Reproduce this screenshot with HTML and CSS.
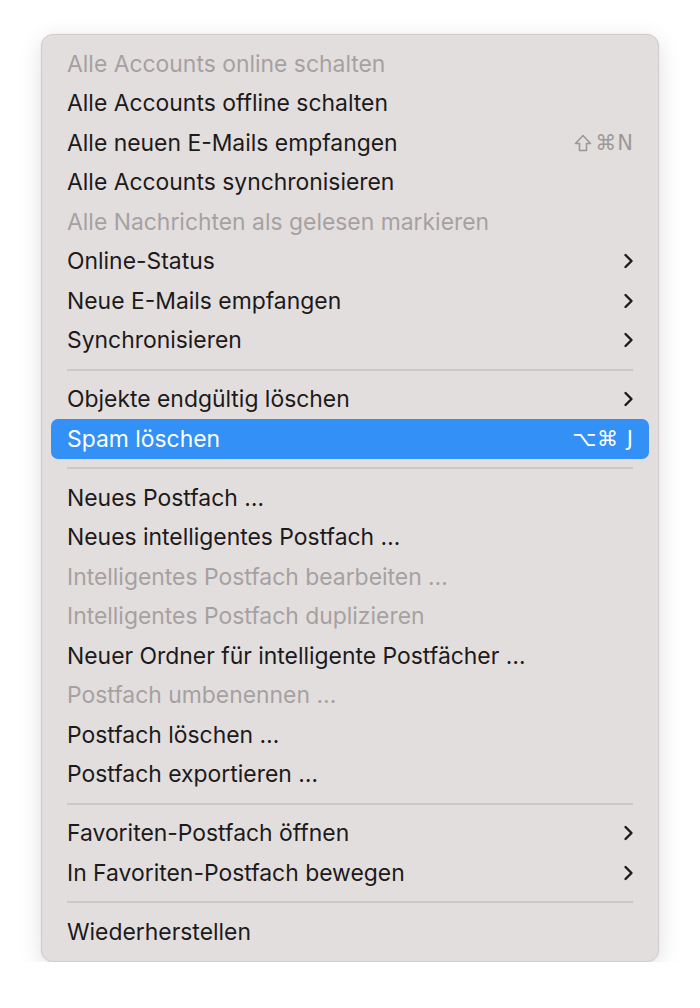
FILE: index.html
```html
<!DOCTYPE html>
<html lang="de">
<head>
    <meta charset="UTF-8">
    <title>Postfach</title>
    <link rel="stylesheet" href="styles.css">
</head>
<body>
    <div class="menu">
        <div class="item disabled"><span class="label">Alle Accounts online schalten</span></div>
        <div class="item"><span class="label">Alle Accounts offline schalten</span></div>
        <div class="item"><span class="label">Alle neuen E-Mails empfangen</span><span class="keys"><svg class="shift" viewBox="0 0 18 18"><path d="M9 1.5 L16.5 9.5 H12.5 V16.5 H5.5 V9.5 H1.5 Z"/></svg>⌘N</span></div>
        <div class="item"><span class="label">Alle Accounts synchronisieren</span></div>
        <div class="item disabled"><span class="label">Alle Nachrichten als gelesen markieren</span></div>
        <div class="item"><span class="label">Online-Status</span><svg class="chev" viewBox="0 0 10 16"><polyline points="2,2 8,8 2,14"/></svg></div>
        <div class="item"><span class="label">Neue E-Mails empfangen</span><svg class="chev" viewBox="0 0 10 16"><polyline points="2,2 8,8 2,14"/></svg></div>
        <div class="item"><span class="label">Synchronisieren</span><svg class="chev" viewBox="0 0 10 16"><polyline points="2,2 8,8 2,14"/></svg></div>
        <div class="sep"></div>
        <div class="item"><span class="label">Objekte endgültig löschen</span><svg class="chev" viewBox="0 0 10 16"><polyline points="2,2 8,8 2,14"/></svg></div>
        <div class="item active"><span class="label">Spam löschen</span><span class="keys">⌥⌘ J</span></div>
        <div class="sep"></div>
        <div class="item"><span class="label">Neues Postfach …</span></div>
        <div class="item"><span class="label">Neues intelligentes Postfach …</span></div>
        <div class="item disabled"><span class="label">Intelligentes Postfach bearbeiten …</span></div>
        <div class="item disabled"><span class="label">Intelligentes Postfach duplizieren</span></div>
        <div class="item"><span class="label">Neuer Ordner für intelligente Postfächer …</span></div>
        <div class="item disabled"><span class="label">Postfach umbenennen …</span></div>
        <div class="item"><span class="label">Postfach löschen …</span></div>
        <div class="item"><span class="label">Postfach exportieren …</span></div>
        <div class="sep"></div>
        <div class="item"><span class="label">Favoriten-Postfach öffnen</span><svg class="chev" viewBox="0 0 10 16"><polyline points="2,2 8,8 2,14"/></svg></div>
        <div class="item"><span class="label">In Favoriten-Postfach bewegen</span><svg class="chev" viewBox="0 0 10 16"><polyline points="2,2 8,8 2,14"/></svg></div>
        <div class="sep"></div>
        <div class="item"><span class="label">Wiederherstellen</span></div>
    </div>
</body>
</html>
```

FILE: styles.css
```css
* {
    margin: 0;
    padding: 0;
    box-sizing: border-box;
}

body {
    background: #ffffff;
    font-family: 'Inter', 'DejaVu Sans', sans-serif;
    padding: 34px 41px 0 41px;
}

.menu {
    width: 618px;
    background: #e3dede;
    border: 1px solid #d2cdcd;
    border-radius: 12px;
    padding: 9px;
    box-shadow: 0 6px 24px rgba(0, 0, 0, 0.12), 0 0 2px rgba(0, 0, 0, 0.08);
}

.item {
    display: flex;
    align-items: center;
    height: 39.5px;
    padding: 0 16px 0 16px;
    border-radius: 7px;
    font-size: 22.9px;
    color: #1c1a1a;
}

.label {
    flex: 1;
    white-space: nowrap;
}

.item.disabled {
    color: #a6a1a1;
}

.item.active {
    background: #3290f6;
    color: #ffffff;
}

.keys {
    display: flex;
    align-items: center;
    font-family: 'DejaVu Sans', sans-serif;
    font-size: 21px;
    color: #9c9898;
    letter-spacing: 1px;
    margin-right: -1px;
}

.shift {
    width: 18px;
    height: 18px;
    margin-right: 3px;
    fill: none;
    stroke: #9c9898;
    stroke-width: 1.6;
    stroke-linejoin: round;
}

.item.active .keys {
    color: #ffffff;
}

.chev {
    width: 11px;
    height: 16px;
    fill: none;
    stroke: #1c1a1a;
    stroke-width: 2.4;
    stroke-linecap: round;
    stroke-linejoin: round;
    margin-right: -1px;
}

.sep {
    height: 19.5px;
    display: flex;
    align-items: center;
    padding: 0 16px;
}

.sep::after {
    content: '';
    flex: 1;
    height: 2px;
    background: #cdc7c7;
}
```
